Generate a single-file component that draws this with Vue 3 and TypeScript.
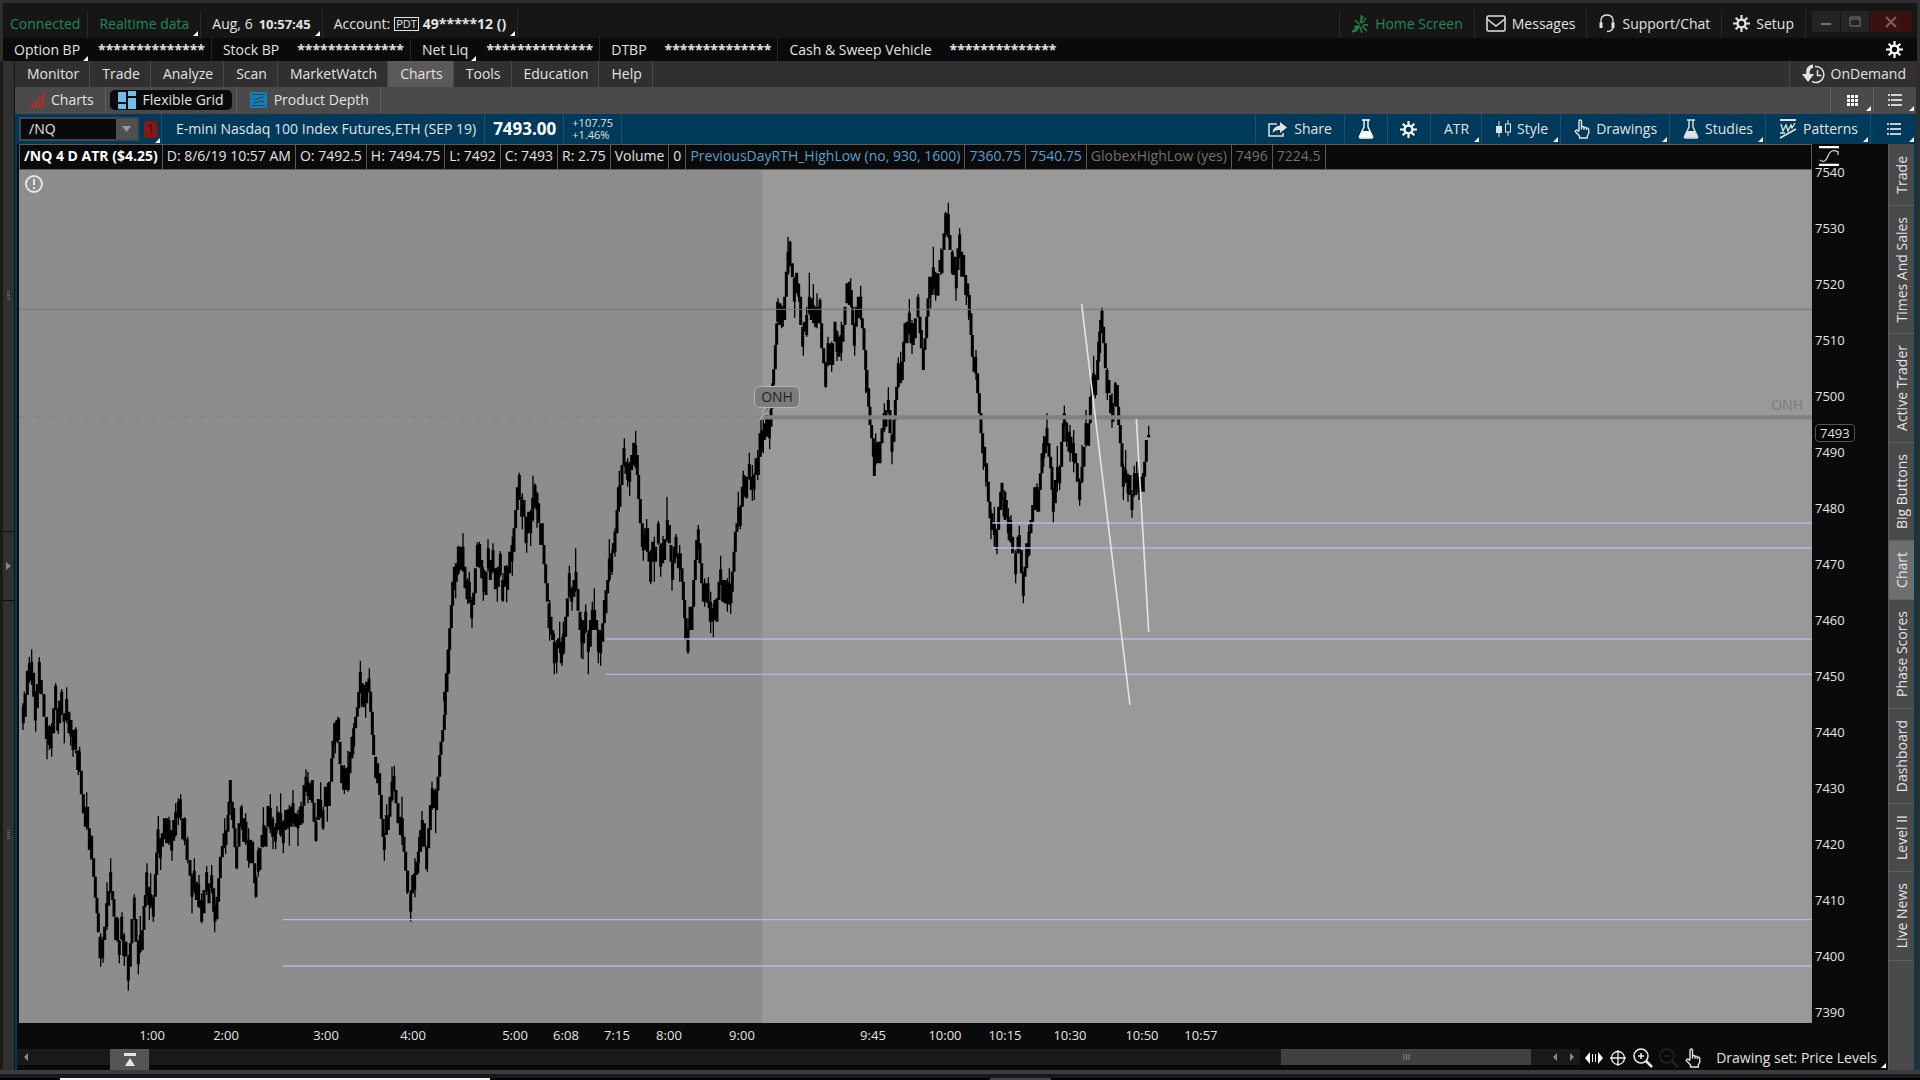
<script setup lang="ts">
interface Session {
  shift: string
  bodies: string
  wicks: string
}

const balances = [
  { name: 'Option BP', menu: true },
  { name: 'Stock BP', menu: false },
  { name: 'Net Liq', menu: true },
  { name: 'DTBP', menu: false },
  { name: 'Cash & Sweep Vehicle', menu: false },
]
const masked = '*'.repeat(14)

const menu = ['Monitor', 'Trade', 'Analyze', 'Scan', 'MarketWatch', 'Charts', 'Tools', 'Education', 'Help']

const readings = [
  { text: '/NQ 4 D ATR ($4.25)', tone: 'strong' },
  { text: 'D: 8/6/19 10:57 AM', tone: '' },
  { text: 'O: 7492.5', tone: '' },
  { text: 'H: 7494.75', tone: '' },
  { text: 'L: 7492', tone: '' },
  { text: 'C: 7493', tone: '' },
  { text: 'R: 2.75', tone: '' },
  { text: 'Volume', tone: '' },
  { text: '0', tone: '' },
  { text: 'PreviousDayRTH_HighLow (no, 930, 1600)', tone: 'blue' },
  { text: '7360.75', tone: 'blue' },
  { text: '7540.75', tone: 'blue' },
  { text: 'GlobexHighLow (yes)', tone: 'dim' },
  { text: '7496', tone: 'dim' },
  { text: '7224.5', tone: 'dim' },
]

const prices = Array.from({ length: 16 }, (_, i) => 7540 - i * 10)

const tabs = [
  'Trade', 'Times And Sales', 'Active Trader', 'Big Buttons', 'Chart',
  'Phase Scores', 'Dashboard', 'Level II', 'Live News',
]

// Time labels and their distance from the left edge of the plot, in plot pixels.
const plotWidth = 1793
const times: [string, number][] = [
  ['1:00', 133], ['2:00', 207], ['3:00', 307], ['4:00', 394], ['5:00', 496],
  ['6:08', 547], ['7:15', 598], ['8:00', 650], ['9:00', 723], ['9:45', 854],
  ['10:00', 926], ['10:15', 986], ['10:30', 1051], ['10:50', 1123], ['10:57', 1182],
]
const ticks = times.map(([label, x], i) => ({
  label,
  gap: ((x - (i ? times[i - 1][1] : 0)) / plotWidth) * 100 + '%',
}))

// Support levels: left end and height, in thirds of a plot pixel.
const levels = [
  [2920, 1059], [2920, 1134], [1761, 1407], [1761, 1513], [792, 2249], [792, 2388],
]

// Price bars as "x top bottom" triples, in thirds of a plot pixel.
const sessions: Session[] = [
  {
    shift: 'translate(-57 1290)',
    bodies: `70 320 370,76 282 350,82 212 285,88 190 240,95 185 243,101 218 290,106 290 362,112 253 325,118 185 253,124 240 283,132 282 350,139 352 417,146 380 435,153 378 445,161 325 400,167 257 327,173 325 392,179 302 370,185 275 340,192 340 365,200 297 360,207 335 400,213 360 410,219 390 450,227 388 450,233 452 510,238 455 512,244 512 583,250 583 640,256 620 680,263 620 685,268 685 750,275 708 775,281 775 830,286 830 893,291 893 940,295 940 997,300 1010 1075,308 1018 1075,314 980 1020,320 910 980,326 873 917,332 817 873,338 873 900,342 897 950,347 952 1020,353 955 1022,358 1022 1065,365 950 1018,371 1005 1068,378 1025 1070,385 1072 1142,391 1030 1100,396 957 1030,403 893 957,408 957 1025,415 1025 1093,421 1005 1055,427 990 1050,432 918 990,436 885 920,440 817 885,446 862 915,452 882 920,460 892 950,466 822 890,470 758 825,474 688 758,481 715 775,487 700 740,493 655 718,500 655 730,507 660 728,515 690 752,521 660 722,527 635 705,535 605 655,541 598 652,548 655 718,554 655 722,561 718 780,570 780 827,576 827 890,583 812 870,589 845 900,596 853 920,605 900 965,612 870 940,620 817 875,627 850 910,635 825 865,641 865 935,645 915 965,651 890 958,656 835 905,661 770 835,667 738 772,672 700 742,678 690 735,684 645 695,687 605 645,691 540 605,697 605 660,701 625 685,705 685 742,710 740 805,717 670 740,724 620 680,731 655 725,738 665 728,745 718 782,752 720 790,758 725 790,764 790 850,768 830 890,775 752 815,780 745 810,786 705 742,792 675 738,798 682 740,804 618 680,811 625 688,818 657 710,826 680 725,834 635 690,842 640 705,850 665 730,857 630 690,864 628 685,872 620 680,879 610 670,887 640 680,894 645 685,901 620 675,907 617 670,912 555 617,918 530 575,924 545 588,931 550 600,937 540 608,942 608 665,948 665 722,955 597 660,962 600 650,969 630 685,976 560 620,982 565 615,988 545 618,995 475 545,999 422 475,1004 370 435,1011 360 425,1016 355 420,1020 425 493,1025 495 550,1031 500 570,1038 505 570,1045 500 570,1050 455 520,1056 410 475,1061 385 440,1067 350 385,1072 322 350,1076 275 325,1081 215 278,1087 250 320,1093 255 322,1100 245 310,1107 235 275,1112 275 335,1117 335 405,1121 405 465,1127 470 535,1133 490 550,1139 520 585,1144 585 657,1149 657 710,1153 710 750,1159 645 705,1165 645 690,1170 590 650,1176 545 600,1182 528 570,1188 570 610,1194 610 670,1201 650 705,1207 655 710,1212 710 755,1217 755 812,1223 812 877,1232 877 935,1238 825 880,1244 820 870,1250 785 825,1255 755 790,1262 690 755,1267 660 735,1273 670 740,1280 740 808,1286 685 745,1291 615 690,1297 565 625,1304 570 625,1310 570 630,1314 530 572,1319 465 530,1323 425 465,1328 390 425,1333 345 390,1336 275 345,1341 220 275,1346 148 220`,
    wicks: `69 310 390,73 275 350,88 170 250,95 148 255,107 275 395,118 172 280,141 350 478,148 375 450,155 370 470,167 250 330,175 325 402,185 268 345,193 340 430,200 262 370,212 360 437,219 390 470,227 382 460,235 450 525,239 440 515,260 577 690,273 705 780,302 1000 1100,309 1010 1088,321 847 990,332 775 880,352 950 1025,358 1020 1090,366 937 1022,373 1000 1097,385 1065 1172,403 883 960,415 1020 1123,421 948 1060,441 790 890,448 860 960,452 820 925,460 885 965,475 648 760,482 715 810,507 650 735,516 690 782,527 610 710,535 595 675,542 583 660,554 652 735,563 710 790,576 820 940,583 775 880,597 825 925,605 880 970,620 798 885,635 795 880,644 910 997,674 655 745,677 690 762,691 540 610,711 740 808,725 615 690,737 640 735,746 685 803,767 820 893,775 742 830,790 622 742,811 583 700,819 650 748,827 670 748,831 618 700,842 580 710,850 660 760,868 615 737,879 570 680,894 630 738,903 605 675,918 508 575,924 515 610,948 650 725,962 547 655,970 620 690,982 550 665,1006 365 460,1014 350 430,1033 495 582,1044 452 575,1061 370 463,1081 182 280,1097 250 353,1108 205 280,1153 700 782,1160 613 705,1176 500 605,1183 497 575,1206 590 735,1222 812 882,1232 870 965,1245 775 892,1256 710 820,1266 633 740,1282 735 815,1296 545 630,1307 565 700`,
  },
  {
    shift: 'translate(1143 690)',
    bodies: `134 875 905,139 820 875,144 750 822,149 685 750,154 615 685,158 545 618,163 500 570,169 490 545,175 440 520,182 440 510,189 440 512,195 500 565,201 540 598,208 545 605,215 600 655,221 578 615,226 505 580,232 435 500,239 432 498,245 480 535,252 510 575,258 515 585,265 445 505,271 480 540,279 450 515,286 505 568,295 500 560,301 462 525,308 540 602,316 497 560,323 500 570,329 455 520,336 435 485,342 385 455,347 330 385,352 262 330,358 225 290,365 290 350,372 300 350,378 350 430,386 335 400,392 340 400,398 293 360,405 255 320,411 280 330,416 310 368,422 370 435,427 370 435,432 435 493,437 493 550,442 550 605,447 610 685,453 650 705,458 690 720,463 725 790,469 730 785,476 715 745,484 725 790,491 700 760,497 650 710,502 595 650,508 520 590,515 565 605,522 540 590,528 515 570,534 567 632,540 635 690,546 660 728,551 665 730,557 635 695,565 700 755,571 660 740,577 630 690,584 630 680,590 660 690,595 690 755,602 700 760,608 670 725,613 600 670,618 570 640,623 540 580,628 475 540,635 460 515,640 430 460,645 395 455,651 330 400,655 262 330,660 255 320,666 195 255,672 145 195,678 185 222,683 190 240,689 200 245,695 165 210,701 128 195,707 135 200,712 165 225,716 225 297,721 297 370,727 370 440,730 405 452,737 385 450,743 385 455,747 455 485,752 480 545,758 425 485,767 440 485,775 370 430,782 435 500,788 430 490,794 418 480,802 360 420,808 375 430,813 435 485,818 485 540,823 440 490,828 410 470,835 460 505,841 460 510,846 505 545,850 545 600,854 600 655,857 655 720,864 688 755,870 620 690,876 620 690,881 540 620,886 480 540,890 420 480,895 388 445,900 430 490,905 490 550,910 550 605,917 550 605,924 550 610,931 605 665,938 625 665,945 600 660,951 595 665,957 545 600,962 508 550,968 540 605,975 540 610,982 545 612,988 550 610,993 570 610,997 515 575,1002 455 515,1006 395 455,1011 370 395,1016 320 375,1021 320 378,1027 260 320,1032 225 290,1040 230 295,1048 192 235,1054 230 270,1062 225 270,1068 175 225,1075 170 225,1080 100 170,1087 90 155`,
    wicks: `167 495 595,175 437 525,189 400 515,203 535 612,208 515 610,216 590 685,232 427 500,238 425 505,250 500 602,264 418 515,279 430 520,292 505 605,301 453 530,309 520 605,320 495 607,337 410 527,358 218 300,367 280 388,380 350 458,392 330 438,399 227 365,405 250 325,411 275 383,449 600 722,463 700 823,470 720 820,479 665 760,486 710 797,490 665 765,508 497 595,516 560 632,527 445 575,544 655 775,549 660 778,557 613 700,565 690 823,577 605 690,583 565 690,595 688 790,602 690 797,628 418 545,636 450 525,645 385 470,658 212 335,673 115 200,683 175 260,689 185 287,707 92 205,730 400 482,740 357 455,752 450 553,763 410 545,775 362 435,782 430 530,789 408 490,801 290 425,816 480 572,828 402 475,839 435 545,864 655 762,895 375 450,914 535 620,925 532 625,932 575 700,940 610 712,962 467 555,982 535 635,988 505 615,992 560 642,1015 275 380,1021 315 388,1030 212 295,1048 158 240,1057 195 303,1063 220 300,1073 150 240,1083 60 170,1090 60 160`,
  },
  {
    shift: 'translate(2163 30)',
    bodies: `66 755 815,73 730 780,80 705 770,88 715 775,93 680 740,98 610 685,101 568 615,106 495 568,110 430 495,113 365 425,120 370 435,127 380 440,134 350 420,139 275 350,144 215 280,150 185 255,157 250 292,163 295 365,170 278 340,176 312 350,182 350 435,188 440 500,194 425 455,200 405 465,208 350 400,214 355 420,221 375 430,227 380 442,234 380 430,240 360 430,245 430 505,251 505 550,257 550 620,264 490 555,271 490 555,278 490 555,285 425 485,291 455 515,297 470 530,303 465 520,309 435 485,315 380 435,321 310 370,328 305 375,334 330 380,338 380 435,343 435 497,349 380 440,355 350 415,362 350 415,367 415 445,372 445 510,377 510 570,381 570 635,386 625 680,390 680 735,395 735 775,400 775 830,403 830 888,408 790 850,414 785 850,420 785 850,426 745 790,432 700 750,438 690 740,445 660 695,450 690 760,456 765 815,462 720 785,466 660 720,470 620 660,475 550 620,482 560 610,487 545 600,491 485 545,495 430 490,501 425 490,508 398 460,513 430 490,520 430 495,526 415 475,534 350 410,540 410 460,544 450 505,550 505 570,555 475 510,560 410 475,564 355 410,569 290 355,576 290 345,580 262 320,587 280 345,594 280 347,600 240 275,606 210 280,612 160 210,617 100 165,625 102 170,630 165 210,637 215 280,643 230 285,649 260 325,654 205 270,659 163 230,665 215 290,671 225 290,677 285 345,683 310 350,688 345 410,693 400 465,697 465 530,702 530 575,707 530 580,713 580 640,718 640 700,723 700 760,728 760 820,734 800 860,740 850 905,745 905 965,750 965 1015,756 1000 1050,763 1030 1065,770 1050 1110,776 980 1050,782 935 990,786 908 960,792 955 1010,799 960 1015,805 1010 1060,812 1020 1085,818 1070 1120,827 1120 1183,834 1070 1120,838 1065 1115,844 1110 1180,850 1180 1248,855 1160 1190,860 1090 1165,867 1055 1125,873 1020 1060,878 975 1025,884 922 990,891 920 990,896 930 995,901 880 930,906 820 880,911 790 835,916 770 820,921 745 795,927 790 830,932 830 865,936 860 930,940 930 995,946 900 970,953 860 905,959 860 910,965 785 860,970 730 785,973 700 735,980 730 785,987 755 815,993 770 820,1000 790 845,1007 820 850,1012 850 905,1019 905 960,1026 860 905,1032 800 860,1038 730 795,1046 730 797,1051 650 730,1056 590 650,1061 580 620,1067 590 645,1073 540 600,1076 485 545,1079 455 520,1082 420 460,1086 392 450,1091 440 490,1096 490 565,1101 570 640,1107 600 640,1112 645 700,1119 670 725,1126 610 675,1132 615 680,1136 680 735,1141 735 790,1146 790 860,1150 860 920,1157 870 905,1164 885 940,1170 885 945,1176 945 990,1183 880 945,1190 880 930,1197 890 940,1204 890 935,1210 880 935,1214 845 890,1219 780 845,1226 765 772`,
    wicks: `89 710 808,114 355 435,125 375 445,144 170 285,150 182 260,164 290 413,176 310 365,190 430 527,200 380 470,208 278 405,220 312 425,231 340 445,240 355 430,257 545 623,264 470 560,275 485 575,291 450 543,304 425 543,332 295 380,344 430 527,362 317 420,377 560 640,407 760 855,433 670 757,445 622 700,456 760 853,475 532 625,482 515 605,508 357 465,516 420 522,535 342 415,572 290 385,580 200 330,587 275 362,603 205 285,617 95 170,625 68 175,637 210 285,648 230 362,659 145 235,679 305 375,686 335 420,708 510 600,730 790 870,738 850 920,753 990 1078,763 980 1100,771 1045 1123,793 930 1020,797 935 1020,805 985 1080,813 1005 1090,827 1110 1210,838 1037 1120,850 1175 1270,866 1035 1130,891 910 995,911 767 860,921 700 800,940 925 1030,952 798 935,959 855 930,973 677 740,980 725 800,990 735 845,1001 750 877,1019 895 977,1026 795 910,1038 690 800,1061 527 645,1066 585 655,1086 383 455,1102 565 660,1116 640 743,1126 605 680,1150 850 960,1157 810 910,1164 880 965,1176 930 1013,1183 857 950,1190 845 945,1197 860 960,1226 737 770`,
  },
]

function strokes(bars: string): string {
  return bars.replace(/(\d+) (\d+) (\d+),?/g, 'M$1 $2V$3')
}
</script>

<template>
  <div class="window">
    <svg class="sprite" aria-hidden="true">
      <symbol id="gear" viewBox="0 0 16 16">
        <circle cx="8" cy="8" r="3.7" fill="none" stroke="currentColor" stroke-width="2.2" />
        <path d="M8 0V4M8 12V16M0 8H4M12 8H16M2.5 2.5L5 5M11 11L13.5 13.5M2.5 13.5L5 11M11 5L13.5 2.5" stroke="currentColor" stroke-width="2" />
      </symbol>
      <symbol id="flask" viewBox="0 0 16 20">
        <path d="M4 1H12M6 1V8L1.5 17.5Q1 19 2.5 19H13.5Q15 19 14.5 17.5L10 8V1" fill="none" stroke="currentColor" stroke-width="1.4" />
        <path d="M4.6 12H11.4L14.6 18.6H1.4Z" fill="currentColor" />
      </symbol>
      <symbol id="hand" viewBox="0 0 16 20">
        <path d="M5 12V2.4Q5 1 6.2 1T7.5 2.4V8Q9 7 10 8.4Q11.5 7.6 12.4 9.2Q14.8 8.6 14.8 11V14L13.3 17V19H5.5V17L1.2 12.6Q1.6 10.6 3.2 11.2L5 12.6M7.5 8V10.5M10 8.4V10.8M12.4 9.2V11" fill="none" stroke="currentColor" stroke-width="1.4" stroke-linejoin="round" />
      </symbol>
      <symbol id="list" viewBox="0 0 14 12">
        <path d="M0 1H2M3 1H14M0 6H2M3 6H14M0 11H2M3 11H14" stroke="currentColor" stroke-width="1.4" />
      </symbol>
    </svg>

    <header class="title">
      <span class="item green">Connected</span>
      <button class="item green corner">Realtime data</button>
      <button class="item corner"><span>Aug, 6</span><b class="clock">10:57:45</b></button>
      <button class="item corner account"><span>Account:</span><span class="pdt">PDT</span><b>49*****12 ()</b></button>
      <span class="fill edge"></span>
      <button class="item green">
        <svg width="18" height="20" viewBox="0 0 18 20" fill="none" stroke="currentColor" stroke-width="1.3"><path d="M10 9V1M11 9L15 4M12 11H17M11 12L16 17M9 13L11 19M8 10L4 6M9 11L1 18L5 17L8 13M9 9L12 2M8 12L3 13" /></svg>
        Home Screen
      </button>
      <button class="item">
        <svg width="20" height="17" viewBox="0 0 20 17" fill="none" stroke="currentColor" stroke-width="1.5"><rect x="1" y="1" width="18" height="15" rx="1.5" /><path d="M1 4L10 11L19 4" /></svg>
        Messages
      </button>
      <button class="item">
        <svg width="18" height="19" viewBox="0 0 18 19" fill="none" stroke="currentColor" stroke-width="1.4"><path d="M3 9Q2 1 9 1T15 9M15 14Q13.5 17.5 9 17.5" /><path d="M3 8.5V14M15 8.5V14" stroke-width="3" /></svg>
        Support/Chat
      </button>
      <button class="item"><svg width="17" height="17"><use href="#gear" /></svg>Setup</button>
      <div class="controls">
        <button aria-label="Minimize"><svg width="12" height="12"><path d="M1 8H11" stroke="#777" stroke-width="2" /></svg></button>
        <button aria-label="Maximize"><svg width="12" height="12"><path d="M1 1H11V10H1ZM1 3H11" fill="none" stroke="#777" stroke-width="1" /></svg></button>
        <button class="close" aria-label="Close"><svg width="12" height="12"><path d="M1 1L11 11M11 1L1 11" stroke="#7b6060" stroke-width="2" /></svg></button>
      </div>
    </header>

    <div class="balances">
      <div v-for="b in balances" :key="b.name" class="balance">
        <span :class="{ corner: b.menu }">{{ b.name }}</span><b>{{ masked }}</b>
      </div>
      <button class="gear" aria-label="Account settings"><svg width="17" height="17"><use href="#gear" /></svg></button>
    </div>

    <div class="body">
      <aside class="rail">
        <i></i>
        <button aria-label="Expand sidebar"><svg width="5" height="8"><path d="M0 0L5 4L0 8Z" fill="#888" /></svg></button>
        <i></i>
      </aside>

      <div class="workspace">
        <nav class="menu">
          <button v-for="m in menu" :key="m" :class="{ active: m === 'Charts' }">{{ m }}</button>
          <span class="fill"></span>
          <button class="demand">
            <svg width="24" height="20" viewBox="0 0 24 20" fill="none" stroke="currentColor"><path d="M11 2Q5 3 6 11" stroke-width="3.5" /><path d="M0 10H12L6 18Z" fill="currentColor" stroke="none" /><path d="M13 2.5A8 8 0 1 1 10 17.5M15.5 6V11.5H19.5" stroke-width="1.5" /></svg>
            OnDemand
          </button>
        </nav>

        <nav class="views">
          <div><button><svg width="16" height="17"><path d="M1 16V14M4.5 16V11M8 16V8M11.5 16V4M15 16V0" stroke="#b52a2a" stroke-width="2" /></svg>Charts</button></div>
          <div class="chosen"><button><svg width="18" height="18"><path d="M0 1H8V11H0ZM0 13H8V18H0ZM10 0H18V5H10ZM10 7H18V18H10Z" fill="#6fbdea" /></svg>Flexible Grid</button></div>
          <div><button><svg width="17" height="16" fill="none" stroke="#2b3f4a"><rect width="17" height="16" fill="#1180b8" stroke="none" /><path d="M2 2.5H15M2 13.5H15M3 6L6 8L9 6L14 5M3 10L6 11L10 9L14 10" /></svg>Product Depth</button></div>
          <span class="fill"></span>
          <button class="square corner" aria-label="Grid layout"><svg width="11" height="11"><path d="M0 1.5H11M0 5.5H11M0 9.500H11" stroke="#fff" stroke-width="3" stroke-dasharray="3 1" /></svg></button>
          <button class="square corner" aria-label="Grid menu"><svg width="14" height="12"><use href="#list" /></svg></button>
        </nav>

        <div class="toolbar">
          <div class="symbol">
            <div class="combo">
              <input aria-label="Symbol" value="/NQ" />
              <button aria-label="Choose symbol"><svg width="9" height="6"><path d="M0 0H9L4.5 6Z" fill="#999" /></svg></button>
            </div>
            <button class="link corner">1</button>
          </div>
          <div class="name">E-mini Nasdaq 100 Index Futures,ETH (SEP 19)</div>
          <div class="last">7493.00</div>
          <div class="change"><span>+107.75</span><span>+1.46%</span></div>
          <span class="fill edge"></span>
          <button><svg width="20" height="16" viewBox="0 0 20 16"><path d="M9 3H1V15H15V12" fill="none" stroke="currentColor" stroke-width="1.5" /><path d="M12 1L19 6.5L12 12V9Q7 8.5 4.5 12Q5 5 12 4.5Z" fill="currentColor" /></svg>Share</button>
          <button class="square" aria-label="Edit studies"><svg width="16" height="20"><use href="#flask" /></svg></button>
          <button class="square" aria-label="Chart settings"><svg width="17" height="17"><use href="#gear" /></svg></button>
          <button class="corner">ATR</button>
          <button class="corner"><svg width="16" height="18" viewBox="0 0 16 18"><path d="M4 1V17M13 0V4M13 12V16" stroke="currentColor" /><rect x="1" y="6" width="6" height="7" fill="currentColor" /><rect x="10.5" y="4" width="5" height="8" fill="none" stroke="currentColor" /></svg>Style</button>
          <button class="corner"><svg width="16" height="20"><use href="#hand" /></svg>Drawings</button>
          <button class="corner"><svg width="16" height="20"><use href="#flask" /></svg>Studies</button>
          <button class="corner"><svg width="18" height="20" viewBox="0 0 18 20" fill="none" stroke="currentColor"><path d="M1 1H17" stroke-width="2" /><path d="M2 5L4 12L7 6L9 12L12 6L13 9L16 4" stroke-width="1.3" /><path d="M1 19L17 10M1 14L6 14" stroke-width="1.7" /></svg>Patterns</button>
          <button class="square corner" aria-label="Chart menu"><svg width="14" height="12"><use href="#list" /></svg></button>
        </div>

        <div class="desk">
          <main class="chart">
            <div class="stage">
              <div class="market">
                <div class="readings">
                  <span v-for="r in readings" :key="r.text" :class="r.tone">{{ r.text }}</span>
                </div>
                <div class="plot">
                  <svg viewBox="0 0 5379 2559" preserveAspectRatio="none" role="img" aria-label="/NQ price chart">
                    <rect width="2230" height="2559" fill="#8d8d8d" />
                    <g v-for="s in sessions" :key="s.shift" :transform="s.shift" stroke="#000" fill="none">
                      <path :d="strokes(s.bodies)" stroke-width="9" />
                      <path :d="strokes(s.wicks)" stroke-width="4" />
                    </g>
                    <path d="M0 418H5379" stroke="#767676" stroke-width="3" />
                    <path d="M0 741H2230" stroke="#7e7e7e" stroke-width="3" stroke-dasharray="19 30" />
                    <path d="M2220 742H5379" stroke="#808080" stroke-width="13" />
                    <path v-for="[x, y] in levels" :key="y" :d="`M${x} ${y}H5379`" stroke="#b8b4f4" stroke-width="4" />
                    <path d="M3188 402L3333 1605M3352 747L3389 1386" stroke="#e2e2e2" stroke-width="5" />
                    <path d="M2245 705L2222 750L2262 705" fill="#7c7c7c" stroke="#b0b0b0" stroke-width="3" />
                  </svg>
                  <span class="bubble">ONH</span>
                  <span class="tag">ONH</span>
                  <button class="alert" aria-label="Chart notice"><svg width="20" height="20" fill="none" stroke="#e6e6e6"><circle cx="10" cy="10" r="8" stroke-width="2" /><path d="M10 5V11M10 13V15" stroke-width="2" /></svg></button>
                </div>
              </div>
              <div class="scale">
                <button class="fit" aria-label="Fit price scale"><svg width="20" height="20" fill="none" stroke="#fff"><path d="M0 1H20M0 19H20" stroke-width="2.5" /><path d="M1 14Q6 18 9 10T19 6M19 9V5" stroke="#ccc" stroke-width="1.3" /></svg></button>
                <div class="prices">
                  <span v-for="p in prices" :key="p">{{ p }}</span>
                  <span class="now">7493</span>
                </div>
              </div>
            </div>

            <div class="times">
              <div v-for="t in ticks" :key="t.label" :style="{ width: t.gap }"><span>{{ t.label }}</span></div>
            </div>

            <div class="footer">
              <div class="scroll">
                <button class="step" aria-label="Scroll left"><svg width="4" height="8"><path d="M4 0L0 4L4 8Z" fill="#888" /></svg></button>
                <button class="raise" aria-label="Raise panel"><svg width="12" height="14"><path d="M0 0H12V3H0ZM6 5L11 13H1Z" fill="#e4e4e4" /></svg></button>
                <span class="lane"></span>
                <div class="thumb"><svg width="7" height="6"><path d="M1 0V6M3.5 0V6M6 0V6" stroke="#888" /></svg></div>
                <span class="after"></span>
                <button class="step" aria-label="Back"><svg width="4" height="8"><path d="M4 0L0 4L4 8Z" fill="#888" /></svg></button>
                <button class="step" aria-label="Forward"><svg width="4" height="8"><path d="M0 0L4 4L0 8Z" fill="#888" /></svg></button>
              </div>
              <div class="tools">
                <button aria-label="Fit width"><svg width="18" height="12"><path d="M5 0V12L0 6ZM13 0V12L18 6Z" fill="#fff" /><path d="M7.5 2V10M10.5 2V10" stroke="#fff" /></svg></button>
                <button aria-label="Crosshair"><svg width="18" height="18" fill="none" stroke="#eee" stroke-width="1.3"><circle cx="9" cy="9" r="6.5" /><path d="M9 1V17M1 9H17" /></svg></button>
                <button aria-label="Zoom in"><svg width="20" height="20" fill="none" stroke="#eee" stroke-width="1.5"><circle cx="8" cy="8" r="7" /><path d="M5 8H11M8 5V11" /><path d="M13 13L19 19" stroke-width="2.5" /></svg></button>
                <button aria-label="Zoom out"><svg width="20" height="20" fill="none" stroke="#242424" stroke-width="1.5"><circle cx="8" cy="8" r="7" /><path d="M5 8H11" /><path d="M13 13L19 19" stroke-width="2.5" /></svg></button>
                <button aria-label="Pointer"><svg width="16" height="20"><use href="#hand" /></svg></button>
              </div>
              <button class="set corner">Drawing set: Price Levels</button>
            </div>
          </main>

          <aside class="tabs">
            <button v-for="t in tabs" :key="t" :class="{ active: t === 'Chart' }"><span>{{ t }}</span></button>
          </aside>
        </div>
      </div>
    </div>

    <div class="sill"></div>
    <div class="taskbar"><span class="open"></span><span class="idle"></span></div>
  </div>
</template>

<style>
body {
  background: #000;
}
</style>

<style scoped>
* {
  box-sizing: border-box;
}

.window {
  display: flex;
  flex-direction: column;
  min-height: 100vh;
  background: #0a0a0a;
  color: #e2e2e2;
  font-family: "Open Sans", "Noto Sans", sans-serif;
  font-size: 14px;
  line-height: 18px;
  white-space: nowrap;
}

.sprite {
  position: absolute;
  width: 0;
  height: 0;
}

svg {
  display: block;
  flex: none;
}

button {
  display: flex;
  align-items: center;
  margin: 0;
  padding: 0;
  border: 0;
  background: none;
  color: inherit;
  font: inherit;
  white-space: nowrap;
}

.fill {
  flex: 1;
}

.corner {
  position: relative;
}

.corner::after {
  content: "";
  position: absolute;
  right: 2px;
  bottom: 2px;
  border: solid transparent;
  border-width: 0 0 5px 5px;
  border-bottom-color: #fff;
}

.title {
  display: flex;
  height: 38px;
  padding: 8px 5px 0 3px;
  border: solid #2e2e2e;
  border-width: 3px 3px 0;
  background: #161616;
}

.item {
  display: flex;
  align-items: center;
  gap: 6px;
  padding: 0 11px 2px;
  border-right: 1px solid #2a2a2a;
}

.item:first-child {
  padding-left: 4px;
  padding-right: 7px;
}

.green {
  color: #1f8a54;
}

.account {
  gap: 4px;
}

.clock {
  font-size: 13px;
}

.pdt {
  padding: 0 1px;
  border: 1px solid #e2e2e2;
  font-size: 11px;
  line-height: 12px;
}

.edge {
  border-right: 1px solid #2a2a2a;
}

.controls {
  display: flex;
  gap: 1px;
  padding-left: 6px;
}

.controls button {
  justify-content: center;
  width: 28px;
  height: 21px;
  background: #242424;
}

.controls .close {
  width: 42px;
  background: #3b1010;
}

.balances {
  display: flex;
  height: 23px;
  border-left: 3px solid #2e2e2e;
  border-right: 3px solid #2e2e2e;
  background: #0a0a0a;
}

.balance {
  display: flex;
  align-items: center;
  gap: 18px;
  padding: 0 6px 0 11px;
  border-right: 1px solid #262626;
}

.balance:last-of-type {
  border: 0;
}

.balance .corner::after {
  right: -8px;
  bottom: -2px;
}

.gear {
  margin-left: auto;
  padding-right: 14px;
  color: #fff;
}

.body {
  display: flex;
  flex: 1;
  border-left: 3px solid #1a1a1a;
  border-right: 4px solid #2e2e2e;
}

.rail {
  display: flex;
  flex-direction: column;
  width: 12px;
  border-right: 1px solid #111;
  background: #303030;
}

.rail i {
  display: flex;
  flex: 1;
  align-items: center;
  justify-content: center;
}

.rail i::before {
  content: "";
  width: 3px;
  height: 10px;
  background: repeating-linear-gradient(#666 0 1px, #303030 1px 2px);
}

.rail button {
  justify-content: center;
  height: 70px;
  border: solid #0d0d0d;
  border-width: 1px 0;
}

.workspace {
  display: flex;
  flex: 1;
  flex-direction: column;
  min-width: 0;
}

.menu {
  display: flex;
  height: 26px;
  background: #303030;
}

.menu button {
  padding: 0 10px 0 12px;
  border-right: 1px solid #484848;
}

.menu .active {
  background: #5a5a5a;
}

.menu .demand {
  gap: 5px;
  padding-left: 12px;
  border-right: 0;
  border-left: 1px solid #484848;
}

.views {
  display: flex;
  height: 27px;
  padding-bottom: 1px;
  background: #4a4a4a;
}

.views div {
  display: flex;
  align-items: center;
  padding: 0 11px 0 13px;
  border-right: 1px solid #606060;
}

.views div button {
  gap: 7px;
}

.views .chosen {
  padding: 0 4px;
}

.chosen button {
  height: 20px;
  padding: 0 8px;
  border-radius: 5px;
  background: #0a0a0a;
}

.square {
  justify-content: center;
  width: 43px;
  color: #fff;
}

.views .square {
  border-left: 1px solid #606060;
}

.toolbar {
  display: flex;
  height: 30px;
  background: #003a5a;
}

.toolbar > * {
  display: flex;
  align-items: center;
  border-right: 1px solid #1c5070;
}

.toolbar > button {
  gap: 6px;
  padding: 0 12px;
}

.toolbar > .corner {
  padding-left: 13px;
}

.toolbar > .square {
  padding: 0;
}

.toolbar > button:last-child {
  width: 45px;
  border: 0;
}

.symbol {
  gap: 5px;
  padding: 0 4px;
}

.combo {
  display: flex;
  width: 120px;
  height: 24px;
  border: 2px solid #454545;
  background: #0a0a0a;
}

.combo input {
  flex: 1;
  min-width: 0;
  padding: 0 8px;
  border: 0;
  background: none;
  color: inherit;
  font: inherit;
}

.combo button {
  justify-content: center;
  width: 21px;
  background: #505050;
}

.link {
  justify-content: center;
  width: 13px;
  height: 17px;
  border-radius: 3px;
  background: #8e1414;
  color: #222;
}

.link.corner::after {
  right: -3px;
  bottom: -5px;
}

.toolbar .name {
  padding: 0 8px 0 14px;
}

.toolbar .last {
  padding: 0 7px 0 8px;
  color: #fff;
  font-size: 17px;
  font-weight: 700;
}

.toolbar .change {
  flex-direction: column;
  align-items: flex-start;
  justify-content: center;
  padding: 0 8px;
  font-size: 11px;
  line-height: 12px;
}

.desk {
  display: flex;
  flex: 1;
}

.chart {
  display: flex;
  flex: 1;
  flex-direction: column;
  min-width: 0;
  border-left: 2px solid #003a5a;
}

.stage {
  display: flex;
  flex: 1;
  padding-left: 2px;
}

.market {
  display: flex;
  flex: 1;
  flex-direction: column;
  min-width: 0;
}

.readings {
  display: flex;
  height: 26px;
  border: 1px solid #5a5a5a;
  overflow: hidden;
}

.readings span {
  display: flex;
  align-items: center;
  padding: 0 4px 2px;
  border-right: 1px solid #5a5a5a;
}

.readings .strong {
  color: #fff;
  font-weight: 700;
}

.readings .blue {
  color: #56a0d0;
}

.readings .dim {
  color: #707070;
}

.plot {
  position: relative;
  flex: 1;
  min-height: 300px;
  background: #999;
}

.plot > svg {
  position: absolute;
  width: 100%;
  height: 100%;
}

.bubble {
  position: absolute;
  top: 25.3%;
  left: 41%;
  padding: 0 6px;
  border: 1px solid #b4b4b4;
  border-radius: 6px;
  background: #7c7c7c;
  color: #222;
  line-height: 20px;
}

.tag {
  position: absolute;
  top: 26.5%;
  right: 9px;
  color: #7c7c7c;
}

.alert {
  position: absolute;
  top: 4px;
  left: 5px;
}

.scale {
  display: flex;
  flex-direction: column;
  width: 76px;
  font-size: 13px;
  line-height: 16px;
}

.fit {
  z-index: 1;
  height: 24px;
  padding-left: 7px;
  background: #0a0a0a;
}

.prices {
  position: relative;
  display: flex;
  flex: 1;
  flex-direction: column;
  justify-content: space-between;
  margin: -4px 0 3px;
  padding-left: 3px;
}

.now {
  position: absolute;
  top: 30.4%;
  padding: 0 4px;
  border: 1px solid #555;
  border-radius: 4px;
  background: #000;
}

.times {
  display: flex;
  height: 26px;
  margin-left: 2px;
  margin-right: 76px;
  padding-bottom: 2px;
  font-size: 13px;
}

.times div {
  display: flex;
  flex: none;
  align-items: center;
  justify-content: flex-end;
}

.times span {
  display: flex;
  justify-content: center;
  width: 0;
}

.footer {
  display: flex;
  height: 21px;
}

.scroll {
  display: flex;
  flex: 1;
  height: 16px;
  background: #191919;
}

.step {
  justify-content: center;
  width: 17px;
}

.raise {
  justify-content: center;
  width: 39px;
  height: 22px;
  margin-left: 76px;
  background: #555;
}

.lane {
  flex: 1;
}

.thumb {
  display: flex;
  align-items: center;
  justify-content: center;
  width: 16%;
  background: #414141;
}

.after {
  width: 15px;
}

.tools {
  display: flex;
  align-items: center;
  gap: 6px;
  padding: 0 15px 4px 5px;
}

.tools button {
  height: 18px;
}

.set {
  padding: 0 11px 4px 0;
}

.tabs {
  display: flex;
  flex-direction: column;
  width: 28px;
  padding-top: 1px;
  border-left: 1px solid #5a5a5a;
  border-right: 2px solid #003a5a;
  background: #4a4a4a;
}

.tabs button {
  justify-content: center;
  padding: 11px 0;
  border-bottom: 1px solid #606060;
}

.tabs span {
  writing-mode: vertical-rl;
  transform: rotate(180deg);
}

.tabs .active {
  background: #6e6e6e;
}

.sill {
  height: 8px;
  border-top: 4px solid #3c3c3c;
  background: #15181c;
}

.taskbar {
  display: flex;
  height: 2px;
  background: #000;
}

.open {
  width: 430px;
  margin-left: 60px;
  background: #f4f4f4;
}

.idle {
  width: 61px;
  margin-left: 500px;
  background: #444;
}
</style>
